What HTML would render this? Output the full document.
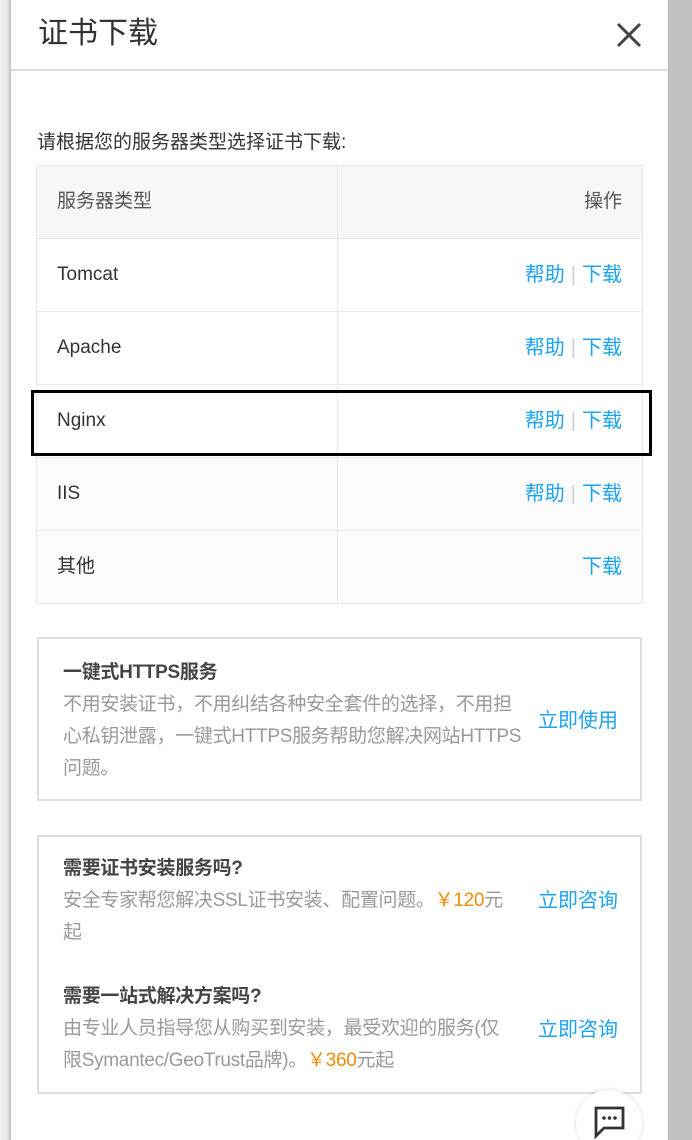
<!DOCTYPE html>
<html style="overflow:hidden"><head><meta charset="utf-8"><style>
*{margin:0;padding:0;box-sizing:border-box}
html,body{width:692px;height:1140px;overflow:hidden}
body{background:#fff;font-family:"Liberation Sans","Noto Sans CJK SC",sans-serif;position:relative}
.ls{position:absolute;left:0;top:0;width:11px;height:1140px;background:linear-gradient(to right,#f2f2f2,#e6e6e6 70%,#bdbdbd)}
.rs{position:absolute;right:0;top:0;width:24px;height:1140px;background:#c2c2c2;border-left:1px solid #b8b8b8}
.title{position:absolute;left:38px;top:13px;font-size:30px;color:#333;line-height:42px}
.x{position:absolute;left:615px;top:21px}
.hl{position:absolute;left:11px;top:69px;width:657px;height:2px;background:#ddd}
.sub{position:absolute;left:37px;top:127px;font-size:19px;color:#333}
table{position:absolute;left:36px;top:165px;width:607px;border-collapse:collapse;font-size:19px;color:#333}
td{border:1px solid #e8e8e8;height:73px;padding:0 20px;line-height:28px;vertical-align:middle}
td span.t{display:inline-block;vertical-align:middle;line-height:28px}
td:first-child{width:301px}
td:last-child{text-align:right;color:#1aa3f0;font-size:20px}
tr.h td{background:#f7f7f7;color:#555;height:73px}
tr.g td{background:#fcfcfc}
.sep{color:#ccc;margin:0 6px}
.hi{position:absolute;left:31px;top:390px;width:621px;height:66px;border:3px solid #000}
.box{position:absolute;left:37px;width:605px;border:2px solid #ddd;font-size:19px;color:#999;line-height:32px;white-space:nowrap;letter-spacing:-0.3px}
.box b{color:#444;font-size:19px}
.or{color:#f08a00}
.btn{position:absolute;right:22px;color:#1aa3f0;font-size:20px;letter-spacing:0}
.chat{position:absolute;left:576px;top:1090px;width:66px;height:66px;border-radius:50%;background:#fff;box-shadow:0 0 4px rgba(0,0,0,.15)}
</style></head><body>
<div class="ls"></div><div class="rs"></div>
<div class="title">证书下载</div>
<svg class="x" width="28" height="28" viewBox="0 0 28 28"><path d="M3 3L25 25M25 3L3 25" stroke="#444" stroke-width="3"/></svg>
<div class="hl"></div>
<div class="sub">请根据您的服务器类型选择证书下载:</div>
<table>
<tr class="h"><td><span class="t">服务器类型</span></td><td style="color:#555;font-size:19px"><span class="t">操作</span></td></tr>
<tr><td><span class="t">Tomcat</span></td><td><span class="t">帮助<span class="sep">|</span>下载</span></td></tr>
<tr><td><span class="t">Apache</span></td><td><span class="t">帮助<span class="sep">|</span>下载</span></td></tr>
<tr><td><span class="t">Nginx</span></td><td><span class="t">帮助<span class="sep">|</span>下载</span></td></tr>
<tr class="g"><td><span class="t">IIS</span></td><td><span class="t">帮助<span class="sep">|</span>下载</span></td></tr>
<tr class="g"><td><span class="t">其他</span></td><td><span class="t">下载</span></td></tr>
</table>
<div class="hi"></div>
<div class="box" style="top:637px;height:164px;padding:18px 0 0 24px">
<b>一键式HTTPS服务</b><br>不用安装证书，不用纠结各种安全套件的选择，不用担<br>心私钥泄露，一键式HTTPS服务帮助您解决网站HTTPS<br>问题。
<span class="btn" style="top:66px">立即使用</span></div>
<div class="box" style="top:835px;height:259px;padding:16px 0 0 24px">
<b>需要证书安装服务吗?</b><br>安全专家帮您解决SSL证书安装、配置问题。<span class="or">￥120</span>元<br>起
<span class="btn" style="top:48px">立即咨询</span>
<div style="height:32px"></div>
<b>需要一站式解决方案吗?</b><br>由专业人员指导您从购买到安装，最受欢迎的服务(仅<br>限Symantec/GeoTrust品牌)。<span class="or">￥360</span>元起
<span class="btn" style="top:177px">立即咨询</span></div>
<div class="chat"><svg width="66" height="66" viewBox="0 0 66 66"><path d="M20 18h27v20H28l-8 8z" fill="none" stroke="#333" stroke-width="2.8"/><circle cx="28" cy="28" r="1.8" fill="#333"/><circle cx="33.5" cy="28" r="1.8" fill="#333"/><circle cx="39" cy="28" r="1.8" fill="#333"/></svg></div>
</body></html>
